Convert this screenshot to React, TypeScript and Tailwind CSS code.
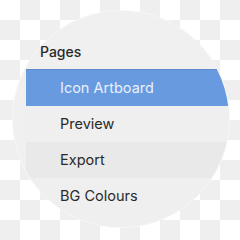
export default function App() {
  const pages = [
    { name: "Icon Artboard", active: true },
    { name: "Preview" },
    { name: "Export", shade: true },
    { name: "BG Colours" },
    { name: "Settings" },
  ];

  return (
    <div
      className="h-[240px] w-[240px] overflow-hidden bg-[conic-gradient(#efefef_25%,#ffffff_0_50%,#efefef_0_75%,#ffffff_0)] bg-[length:40px_40px] pl-[12px] pt-[10px]"
      style={{ fontFamily: 'Inter, "Liberation Sans", sans-serif' }}
    >
      <div className="h-[218px] w-[218px] overflow-hidden rounded-full border border-[#f7f7f7] bg-[#f0f0f0] pt-[29px]">
        {/* Header */}
        <div className="mb-[5px] h-[24px] pl-[27px] text-[14px] leading-[24px] font-medium text-[#2a2a2a]">
          Pages
        </div>

        {/* Page list */}
        <div className="ml-[13px]">
          {pages.map((page) => (
            <div
              key={page.name}
              className={
                page.active
                  ? "flex h-[37px] items-center border-t border-[#5f8acb] bg-[#689ae0] pl-[34px] text-[14.5px] text-[#e9f0fb]"
                  : page.shade
                    ? "flex h-[36px] items-center bg-[#e9e9e9] pl-[34px] text-[14.5px] text-[#2a2a2a]"
                    : "flex h-[36px] items-center bg-[#efefef] pl-[34px] text-[14.5px] text-[#2a2a2a]"
              }
            >
              {page.name}
            </div>
          ))}
        </div>
      </div>
    </div>
  );
}
